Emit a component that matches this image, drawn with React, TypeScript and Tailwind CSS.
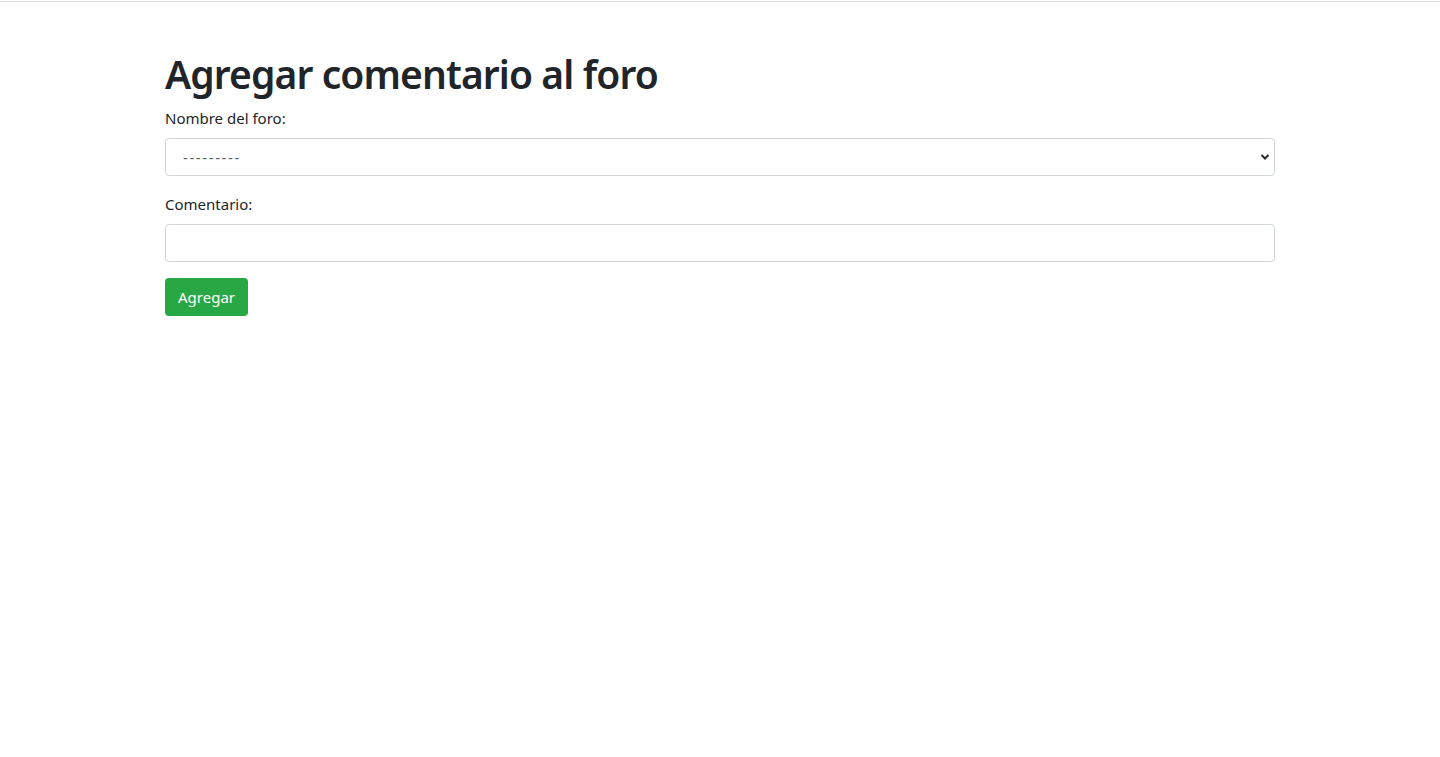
import React from "react";

export default function App() {
  const font = { fontFamily: '"Noto Sans", "Open Sans", "Liberation Sans", sans-serif' };
  return (
    <div className="min-h-[757px] bg-white text-[#212529]" style={font}>
      <div className="mt-px h-px bg-[#dadada]" />
      <div className="mx-auto w-[1140px] px-[15px] pt-[48px]">
        <h1 className="mb-2 text-[39px] font-semibold leading-[48px] tracking-[-0.9px]">Agregar comentario al foro</h1>
        <form className="flex flex-col">
          <div className="mb-4 flex flex-col">
            <label className="mb-2 text-[15px] leading-6">Nombre del foro:</label>
            <div className="relative">
              <select className="block h-[38px] w-full appearance-none rounded border border-[#ced4da] bg-white pl-[17px] pr-8 text-[15px] tracking-[1.6px] text-[#5a6067] outline-none" defaultValue="">
                <option value="">---------</option>
              </select>
              <svg className="pointer-events-none absolute right-[5px] top-[15px]" width="10" height="8" viewBox="0 0 10 8">
                <path d="M1.5 2 L5 5.5 L8.5 2" fill="none" stroke="#2b2b2b" strokeWidth="2" />
              </svg>
            </div>
          </div>
          <div className="mb-4 flex flex-col">
            <label className="mb-2 text-[15px] leading-6">Comentario:</label>
            <input type="text" className="block h-[38px] w-full rounded border border-[#ced4da] bg-white px-3 text-[15px] text-[#495057] outline-none" />
          </div>
          <div>
            <button type="button" className="h-[38px] rounded bg-[#28a745] px-[13px] text-[15px] text-white">Agregar</button>
          </div>
        </form>
      </div>
    </div>
  );
}
